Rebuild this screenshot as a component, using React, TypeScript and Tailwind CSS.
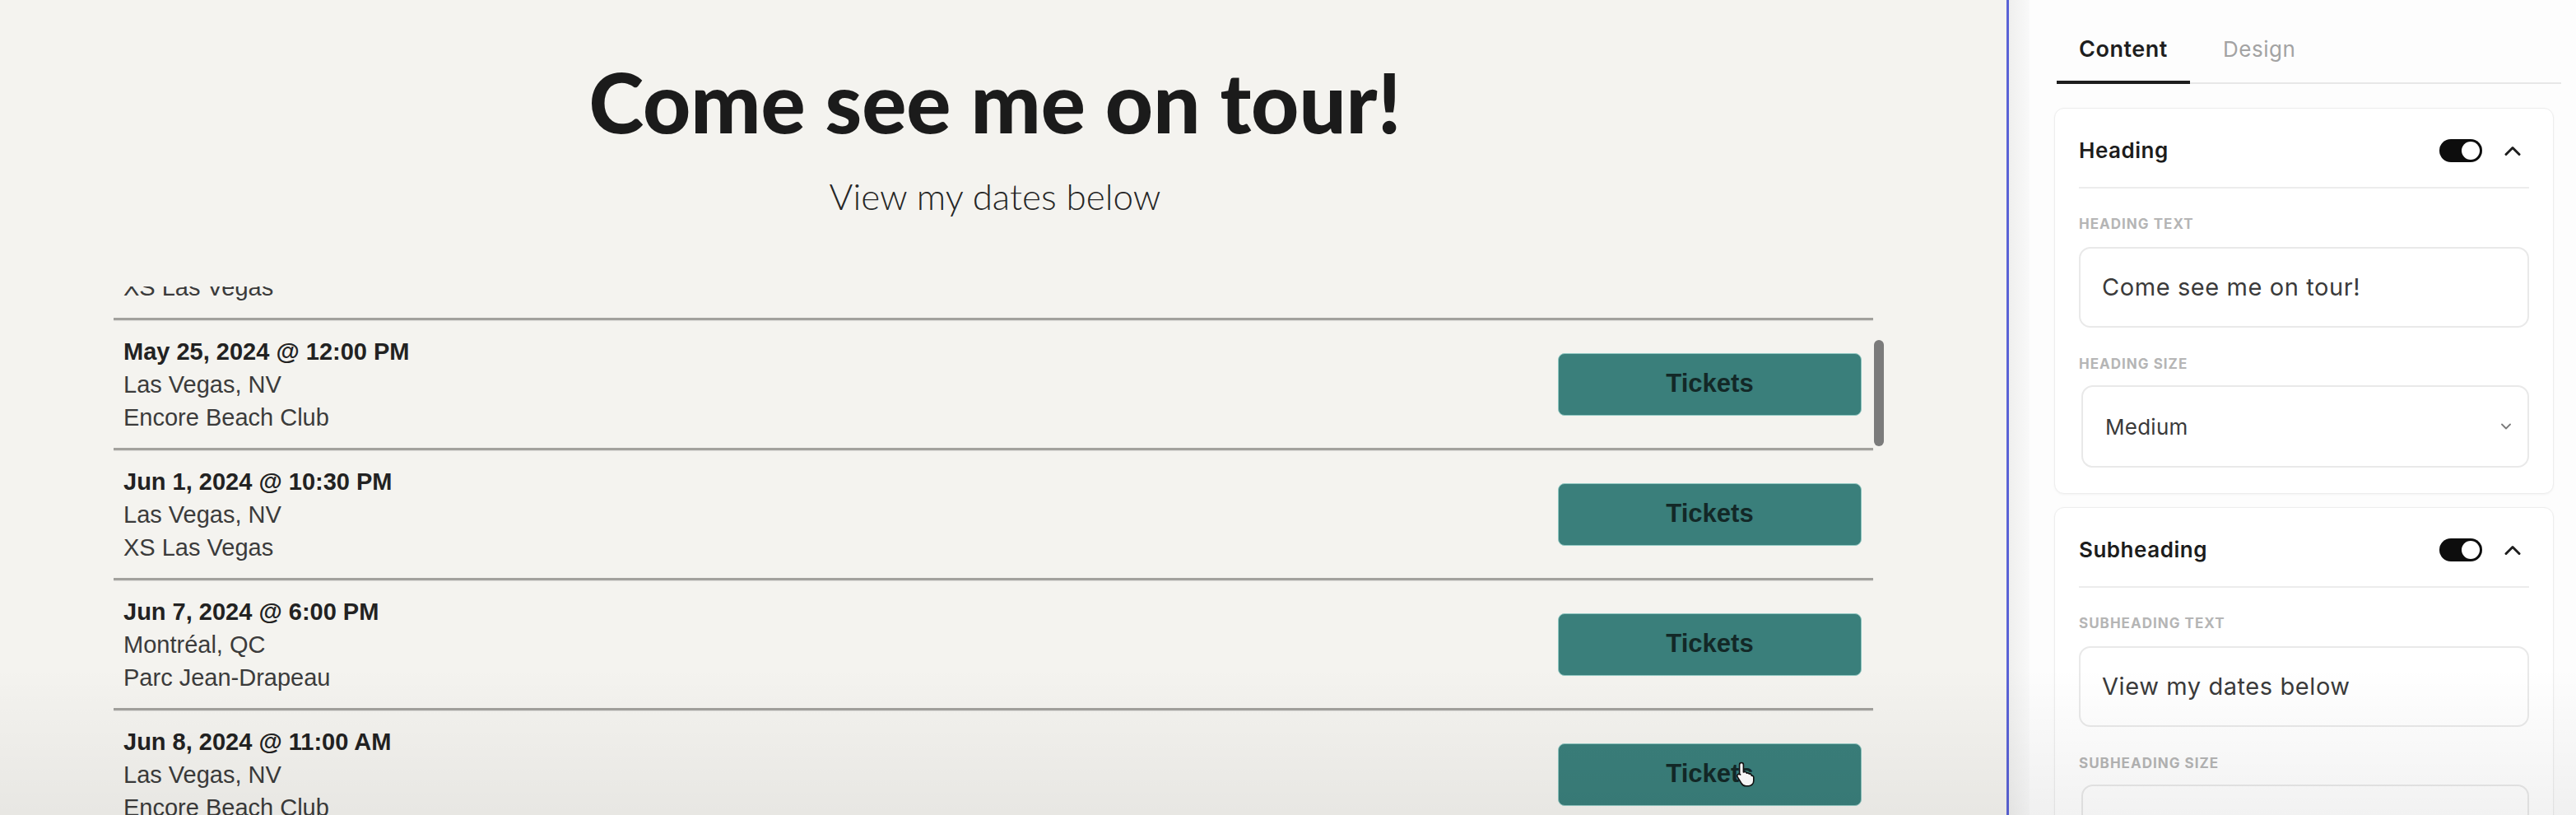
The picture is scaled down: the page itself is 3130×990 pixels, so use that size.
import React from "react";

type Show = { date: string; city: string; venue: string };

const shows: Show[] = [
  { date: "May 24, 2024 @ 10:30 PM", city: "Las Vegas, NV", venue: "XS Las Vegas" },
  { date: "May 25, 2024 @ 12:00 PM", city: "Las Vegas, NV", venue: "Encore Beach Club" },
  { date: "Jun 1, 2024 @ 10:30 PM", city: "Las Vegas, NV", venue: "XS Las Vegas" },
  { date: "Jun 7, 2024 @ 6:00 PM", city: "Montréal, QC", venue: "Parc Jean-Drapeau" },
  { date: "Jun 8, 2024 @ 11:00 AM", city: "Las Vegas, NV", venue: "Encore Beach Club" },
];

function Row({ s, cursor }: { s: Show; cursor?: boolean }) {
  return (
    <div className="flex flex-col">
      <div className="flex h-[155px] items-center justify-between pl-[12px] pr-[14px]">
        <div className="flex flex-col font-['Liberation_Sans',Arial,sans-serif] text-[29px] leading-[40px]">
          <span className="font-bold text-[#222222]">{s.date}</span>
          <span className="text-[#3b3b3b]">{s.city}</span>
          <span className="text-[#3b3b3b]">{s.venue}</span>
        </div>
        <div className="relative flex h-[76px] w-[369px] items-center justify-center rounded-[8px] border border-[#8fc7c1] bg-[#3a7f7b] font-['Liberation_Sans',Arial,sans-serif] text-[31px] font-bold text-[#132827]">
          Tickets
          {cursor && (
            <svg
              className="absolute left-[214px] top-[20px]"
              width="26"
              height="32"
              viewBox="0 0 26 32"
            >
              <path
                d="M8 2.5c1.4 0 2.4 1 2.4 2.4v9l1.2-.3c1.2-.3 2.3.3 2.6 1.4l.2.2c1.1-.6 2.4-.2 2.9.9 1.1-.4 2.3.1 2.7 1.2l.3.9c1.3-.2 2.4.7 2.5 2v4.2c0 3.5-2.7 6.3-6.2 6.3h-3.2c-2.3 0-4.4-1.2-5.5-3.2L3.1 19.6c-.7-1.1-.3-2.5.8-3.1 1-.5 2.1-.3 2.8.5l-1.1-.4V4.9C5.6 3.5 6.6 2.5 8 2.5z"
                fill="#ffffff"
                stroke="#111111"
                strokeWidth="1.6"
                strokeLinejoin="round"
              />
            </svg>
          )}
        </div>
      </div>
      <div className="h-[3px] bg-[#a2a19d] shadow-[0_1px_1px_rgba(0,0,0,0.08)]" />
    </div>
  );
}

function Toggle() {
  return (
    <div className="flex h-[28px] w-[52px] items-center justify-end rounded-full bg-[#0d0d0d] p-[3px]">
      <div className="h-[22px] w-[22px] rounded-full bg-white" />
    </div>
  );
}

function ChevronUp() {
  return (
    <svg width="22" height="14" viewBox="0 0 22 14" fill="none">
      <polyline
        points="3,11.5 11,3.5 19,11.5"
        stroke="#1e1e1e"
        strokeWidth="3"
        strokeLinecap="round"
        strokeLinejoin="round"
      />
    </svg>
  );
}

function ChevronDown() {
  return (
    <svg width="16" height="10" viewBox="0 0 16 10" fill="none">
      <polyline
        points="3,2.5 8,7.5 13,2.5"
        stroke="#7a7a7a"
        strokeWidth="1.8"
        strokeLinecap="round"
        strokeLinejoin="round"
      />
    </svg>
  );
}

function SettingsCard({
  title,
  textLabel,
  textValue,
  sizeLabel,
  sizeValue,
}: {
  title: string;
  textLabel: string;
  textValue: string;
  sizeLabel: string;
  sizeValue: string;
}) {
  return (
    <div className="flex shrink-0 flex-col rounded-[12px] border border-[#ededed] bg-white px-[29px] pb-[31px] pt-[35px] shadow-[0_1px_3px_rgba(0,0,0,0.04)]">
      <div className="flex h-[32px] items-center justify-between pr-[9px]">
        <span className="text-[26px] font-semibold leading-[32px] tracking-[0.02em] text-[#1c1c1c]">
          {title}
        </span>
        <div className="flex items-center gap-[26px]">
          <Toggle />
          <ChevronUp />
        </div>
      </div>
      <div className="mt-[28px] h-[2px] bg-[#ececec]" />
      <div className="mt-[33px] text-[17px] font-bold uppercase leading-[20px] tracking-[0.06em] text-[#b5b5b5]">
        {textLabel}
      </div>
      <div className="mt-[18px] flex h-[98px] items-center rounded-[14px] border-2 border-[#e9e9e9] px-[26px] text-[29px] tracking-[0.02em] text-[#3a3a3a]">
        {textValue}
      </div>
      <div className="mt-[34px] text-[17px] font-bold uppercase leading-[20px] tracking-[0.06em] text-[#b5b5b5]">
        {sizeLabel}
      </div>
      <div className="ml-[3px] mt-[16px] flex h-[100px] items-center justify-between rounded-[14px] border-2 border-[#e9e9e9] pl-[27px] pr-[18px] text-[26px] tracking-[0.01em] text-[#3a3a3a]">
        <span>{sizeValue}</span>
        <ChevronDown />
      </div>
    </div>
  );
}

export default function App() {
  return (
    <div className="relative flex h-[990px] w-[3130px] overflow-hidden bg-[#f4f3ef]">
      {/* Preview */}
      <div className="flex h-full w-[2438px] shrink-0 flex-col items-center bg-[#f4f3ef] pr-[20px]">
        <h1 className="mt-[63px] shrink-0 font-['Lato',sans-serif] text-[101px] font-black leading-[120px] text-[#1b1b1b]">
          Come see me on tour!
        </h1>
        <p className="mt-[29px] shrink-0 font-['Lato',sans-serif] text-[44px] font-light leading-[53px] text-[#262626]">
          View my dates below
        </p>
        <div className="relative mt-[83px] w-full flex-1 overflow-hidden">
          <div className="ml-[138px] mt-[-117px] w-[2138px]">
            {shows.map((s, i) => (
              <Row key={i} s={s} cursor={i === 4} />
            ))}
          </div>
          <div className="absolute left-[2277px] top-[65px] h-[129px] w-[12px] rounded-full bg-[#7b7b7b]" />
        </div>
      </div>

      {/* Editor panel */}
      <div className="flex h-full flex-1 bg-[#fdfdfd] font-['Inter',sans-serif]">
        <div className="h-full w-[3px] shrink-0 bg-[#5a62d6]" />
        <div className="h-full w-[25px] shrink-0 bg-gradient-to-r from-[#efefee] to-[#f9f9f9]" />
        <div className="flex flex-1 flex-col pl-[33px] pr-[18px]">
          <div className="flex h-[102px] shrink-0 items-end border-b-2 border-[#e7e7e7]">
            <div className="-mb-[2px] flex h-[52px] items-start border-b-[4px] border-[#1e1e1e] px-[27px]">
              <span className="text-[27px] font-semibold leading-[20px] tracking-[0.02em] text-[#1e1e1e]">
                Content
              </span>
            </div>
            <div className="flex h-[50px] items-start pl-[40px]">
              <span className="text-[26px] leading-[20px] tracking-[0.02em] text-[#a3a3a3]">Design</span>
            </div>
          </div>
          <div className="ml-[-3px] mr-[9px] mt-[29px] flex shrink-0 flex-col gap-[16px]">
            <SettingsCard
              title="Heading"
              textLabel="Heading text"
              textValue="Come see me on tour!"
              sizeLabel="Heading size"
              sizeValue="Medium"
            />
            <SettingsCard
              title="Subheading"
              textLabel="Subheading text"
              textValue="View my dates below"
              sizeLabel="Subheading size"
              sizeValue="Medium"
            />
          </div>
        </div>
      </div>
      <div className="pointer-events-none absolute bottom-0 left-0 h-[180px] w-full bg-gradient-to-b from-transparent to-[rgba(0,0,0,0.05)]" />
    </div>
  );
}
